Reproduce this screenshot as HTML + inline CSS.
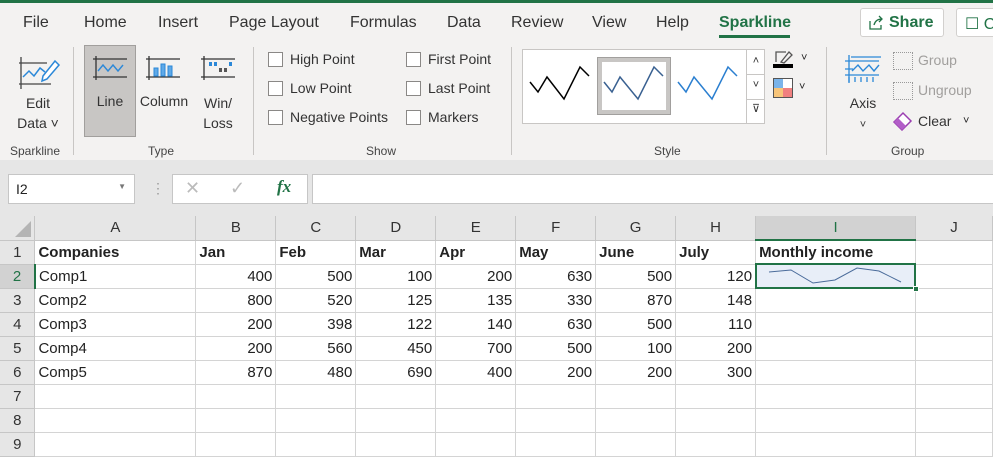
<!DOCTYPE html>
<html><head><meta charset="utf-8"><style>
*{box-sizing:border-box;margin:0;padding:0}
body{width:993px;height:437px;overflow:hidden;background:#fff;font-family:"Liberation Sans",sans-serif;position:relative;color:#222}
.a{position:absolute;white-space:nowrap}
.rb{position:absolute;left:0;top:0;width:993px;height:160px;background:#f3f2f1;border-top:3px solid #217346}
.tab{position:absolute;top:14px;font-size:16px;color:#333}
.sep{position:absolute;top:47px;width:1px;height:108px;background:#c8c6c4}
.lbl{position:absolute;top:144px;font-size:12px;color:#444}
.cb{position:absolute;width:15px;height:15px;border:1px solid #8a8886;background:#fff}
.ct{position:absolute;font-size:14px;color:#333}
.bt{position:absolute;font-size:14px;color:#333;text-align:center}
.grid td{border-right:1px solid #d4d4d4;border-bottom:1px solid #d4d4d4;height:24px;font-size:15px;padding:0 3px;overflow:hidden;white-space:nowrap;line-height:23px}
.grid{position:absolute;left:0;top:216px;border-collapse:collapse;table-layout:fixed}
.grid tr{height:24px}
.grid tr:first-child td{background:#e6e6e6;text-align:center;border-color:#c6c6c6;color:#333}
.grid td.rh{background:#e6e6e6;text-align:center;border-color:#c6c6c6;color:#333}
.n{text-align:right}
.b{font-weight:bold}
</style></head><body>
<div class="rb"></div>
<div class="tab" style="left:23px">File</div>
<div class="tab" style="left:84px">Home</div>
<div class="tab" style="left:158px">Insert</div>
<div class="tab" style="left:229px">Page Layout</div>
<div class="tab" style="left:350px">Formulas</div>
<div class="tab" style="left:447px">Data</div>
<div class="tab" style="left:511px">Review</div>
<div class="tab" style="left:592px">View</div>
<div class="tab" style="left:656px">Help</div>
<div class="tab" style="left:719px;color:#217346;font-weight:bold">Sparkline</div>
<div class="a" style="left:719px;top:35px;width:71px;height:3px;background:#217346"></div>
<div class="a" style="left:860px;top:8px;width:84px;height:29px;background:#fff;border:1px solid #d2d0ce;border-radius:3px;color:#217346;font-weight:bold;font-size:16px;padding:5px 0 0 28px">Share</div>
<svg class="a" style="left:868px;top:15px" width="16" height="16"><path d="M2 6v8h11v-4M6 10c1-4 4-6 8-6M11 1l3 3-3 3" fill="none" stroke="#217346" stroke-width="1.3"/></svg>
<div class="a" style="left:956px;top:8px;width:50px;height:29px;background:#fff;border:1px solid #d2d0ce;border-radius:3px;color:#217346;font-size:16px;padding:5px 0 0 8px">☐ C</div>

<svg class="a" style="left:17px;top:55px" width="44" height="36"><path d="M4 2v32M2 8h28M2 29h32" stroke="#444" stroke-width="1.3" fill="none"/><path d="M6 22l6-6 5 5 6-8 5 4" stroke="#2b88d8" stroke-width="1.5" fill="none"/><path d="M38 6l4 4-12 14-5 2 1-5z" stroke="#2b88d8" stroke-width="1.5" fill="#fff"/></svg>
<div class="bt" style="left:10px;top:93px;width:56px;line-height:20px">Edit<br>Data ˅</div>
<div class="lbl" style="left:10px">Sparkline</div>
<div class="sep" style="left:73px"></div>
<div class="a" style="left:84px;top:45px;width:52px;height:92px;background:#c8c6c4;border:1px solid #a19f9d"></div>
<svg class="a" style="left:92px;top:55px" width="36" height="26"><path d="M4 1v24M1 4h34M1 22h34" stroke="#333" stroke-width="1.3"/><path d="M6 16l5-6 5 6 5-6 5 6 5-6" stroke="#2b88d8" stroke-width="1.4" fill="none"/></svg>
<div class="bt" style="left:84px;top:93px;width:52px">Line</div>
<svg class="a" style="left:145px;top:55px" width="36" height="26"><path d="M4 1v24M1 4h34M1 22h34" stroke="#333" stroke-width="1.3"/><rect x="9" y="13" width="4" height="8" fill="#5ea9e8" stroke="#2b88d8"/><rect x="16" y="9" width="4" height="12" fill="#5ea9e8" stroke="#2b88d8"/><rect x="23" y="11" width="4" height="10" fill="#5ea9e8" stroke="#2b88d8"/></svg>
<div class="bt" style="left:136px;top:93px;width:56px">Column</div>
<svg class="a" style="left:200px;top:55px" width="36" height="26"><path d="M4 1v24M1 4h34M1 22h34" stroke="#333" stroke-width="1.3"/><rect x="9" y="7" width="3" height="4" fill="#2b88d8"/><rect x="14" y="7" width="3" height="4" fill="#2b88d8"/><rect x="19" y="13" width="3" height="4" fill="#555"/><rect x="24" y="13" width="3" height="4" fill="#555"/><rect x="29" y="7" width="3" height="4" fill="#2b88d8"/></svg>
<div class="bt" style="left:194px;top:93px;width:48px;line-height:20px">Win/<br>Loss</div>
<div class="lbl" style="left:148px">Type</div>
<div class="sep" style="left:253px"></div>
<div class="cb" style="left:268px;top:52px"></div><div class="ct" style="left:290px;top:51px">High Point</div>
<div class="cb" style="left:268px;top:81px"></div><div class="ct" style="left:290px;top:80px">Low Point</div>
<div class="cb" style="left:268px;top:110px"></div><div class="ct" style="left:290px;top:109px">Negative Points</div>
<div class="cb" style="left:406px;top:52px"></div><div class="ct" style="left:428px;top:51px">First Point</div>
<div class="cb" style="left:406px;top:81px"></div><div class="ct" style="left:428px;top:80px">Last Point</div>
<div class="cb" style="left:406px;top:110px"></div><div class="ct" style="left:428px;top:109px">Markers</div>
<div class="lbl" style="left:366px">Show</div>
<div class="sep" style="left:511px"></div>
<div class="a" style="left:522px;top:49px;width:243px;height:75px;background:#fff;border:1px solid #c8c6c4"></div>
<div class="a" style="left:597px;top:57px;width:74px;height:58px;border:1px solid #a19f9d;background:#c8c6c4"><div style="margin:4px;height:48px;background:#fff"></div></div>
<svg class="a" style="left:0;top:0" width="760" height="130"><polyline points="530,82 538,92 547,77 564,99 580,67 589,76" stroke="#000" stroke-width="1.5" fill="none"/><polyline points="604,82 612,92 620,77 638,99 654,67 663,76" stroke="#3a6191" stroke-width="1.5" fill="none"/><polyline points="678,82 686,92 694,77 712,99 728,67 737,76" stroke="#2b7fd0" stroke-width="1.5" fill="none"/></svg>
<div class="a" style="left:746px;top:49px;width:19px;height:75px;border-left:1px solid #c8c6c4;font-size:11px;text-align:center;line-height:24px;color:#333">˄<br>˅<br>⊽</div>
<div class="a" style="left:746px;top:74px;width:19px;height:1px;background:#c8c6c4"></div>
<div class="a" style="left:746px;top:99px;width:19px;height:1px;background:#c8c6c4"></div>
<svg class="a" style="left:773px;top:49px" width="22" height="20"><path d="M3 13V3h10M8 13l8-10 3 3-8 8z" stroke="#555" stroke-width="1.3" fill="none"/><rect x="0" y="15" width="20" height="4" fill="#000"/></svg>
<div class="a" style="left:801px;top:52px;font-size:11px">˅</div>
<div class="a" style="left:773px;top:78px;width:20px;height:20px;border:1px solid #555;background:linear-gradient(90deg,#7ab4ea 50%,#fff 50%);"></div>
<div class="a" style="left:774px;top:88px;width:9px;height:9px;background:#f7c57a"></div>
<div class="a" style="left:783px;top:88px;width:9px;height:9px;background:#f08080"></div>
<div class="a" style="left:799px;top:81px;font-size:11px">˅</div>
<div class="lbl" style="left:654px">Style</div>
<div class="sep" style="left:826px"></div>
<svg class="a" style="left:843px;top:53px" width="40" height="32"><path d="M2 8h34M2 16h8M2 22h34M6 2v28" stroke="#2b88d8" stroke-width="1.3"/><path d="M8 4h30M6 24v5M12 24v5M18 24v5M24 24v5M30 24v5" stroke="#2b88d8" stroke-width="1.3"/><path d="M9 18l6-6 5 6 6-6 5 6 5-6" stroke="#2b88d8" stroke-width="1.4" fill="none"/></svg>
<div class="bt" style="left:843px;top:93px;width:40px;line-height:20px">Axis<br><span style="font-size:11px">˅</span></div>
<div class="a" style="left:893px;top:52px;width:20px;height:18px;border:1px dotted #999"></div>
<div class="ct" style="left:918px;top:52px;color:#a19f9d">Group</div>
<div class="a" style="left:893px;top:82px;width:20px;height:18px;border:1px dotted #999"></div>
<div class="ct" style="left:918px;top:82px;color:#a19f9d">Ungroup</div>
<svg class="a" style="left:892px;top:111px" width="22" height="20"><path d="M2 11l9-9 8 8-9 9z" fill="#fff" stroke="#9b3fb1" stroke-width="1.5"/><path d="M2 11l4-4 8 8-4 4z" fill="#b25ec8"/></svg>
<div class="ct" style="left:918px;top:113px">Clear</div>
<div class="a" style="left:963px;top:115px;font-size:11px">˅</div>
<div class="lbl" style="left:891px">Group</div>
<div class="a" style="left:0;top:160px;width:993px;height:56px;background:#e6e6e6"></div>
<div class="a" style="left:8px;top:174px;width:127px;height:30px;background:#fff;border:1px solid #c6c6c6;font-size:14px;padding:6px 0 0 7px">I2<span style="position:absolute;right:8px;top:7px;font-size:8px;color:#777">▼</span></div>
<div class="a" style="left:151px;top:180px;color:#999;font-size:14px">⋮</div>
<div class="a" style="left:172px;top:174px;width:136px;height:30px;background:#fff;border:1px solid #c6c6c6"></div>
<div class="a" style="left:185px;top:178px;color:#bbb;font-size:18px">✕</div>
<div class="a" style="left:230px;top:178px;color:#bbb;font-size:18px">✓</div>
<div class="a" style="left:277px;top:177px;color:#217346;font-size:17px;font-style:italic;font-family:'Liberation Serif',serif;font-weight:bold">fx</div>
<div class="a" style="left:312px;top:174px;width:690px;height:30px;background:#fff;border:1px solid #c6c6c6"></div>
<div class="a" style="left:0;top:216px;width:993px;height:221px;background:#fff"></div>
<table class="grid">
<colgroup><col style="width:35px"><col style="width:161px"><col style="width:80px"><col style="width:80px"><col style="width:80px"><col style="width:80px"><col style="width:80px"><col style="width:80px"><col style="width:80px"><col style="width:160px"><col style="width:77px"></colgroup>
<tr><td style="position:relative"><svg style="position:absolute;right:3px;bottom:3px" width="16" height="16"><path d="M16 0v16H0z" fill="#b4b4b4"/></svg></td><td>A</td><td>B</td><td>C</td><td>D</td><td>E</td><td>F</td><td>G</td><td>H</td><td style="background:#d2d2d2;border-bottom:2px solid #217346;color:#217346">I</td><td>J</td></tr>
<tr><td class="rh">1</td><td class="b">Companies</td><td class="b">Jan</td><td class="b">Feb</td><td class="b">Mar</td><td class="b">Apr</td><td class="b">May</td><td class="b">June</td><td class="b">July</td><td class="b">Monthly income</td><td></td></tr>
<tr><td class="rh" style="background:#d2d2d2;border-right:2px solid #217346;color:#217346">2</td><td>Comp1</td><td class="n">400</td><td class="n">500</td><td class="n">100</td><td class="n">200</td><td class="n">630</td><td class="n">500</td><td class="n">120</td><td></td><td></td></tr>
<tr><td class="rh">3</td><td>Comp2</td><td class="n">800</td><td class="n">520</td><td class="n">125</td><td class="n">135</td><td class="n">330</td><td class="n">870</td><td class="n">148</td><td></td><td></td></tr>
<tr><td class="rh">4</td><td>Comp3</td><td class="n">200</td><td class="n">398</td><td class="n">122</td><td class="n">140</td><td class="n">630</td><td class="n">500</td><td class="n">110</td><td></td><td></td></tr>
<tr><td class="rh">5</td><td>Comp4</td><td class="n">200</td><td class="n">560</td><td class="n">450</td><td class="n">700</td><td class="n">500</td><td class="n">100</td><td class="n">200</td><td></td><td></td></tr>
<tr><td class="rh">6</td><td>Comp5</td><td class="n">870</td><td class="n">480</td><td class="n">690</td><td class="n">400</td><td class="n">200</td><td class="n">200</td><td class="n">300</td><td></td><td></td></tr>
<tr><td class="rh">7</td><td></td><td></td><td></td><td></td><td></td><td></td><td></td><td></td><td></td><td></td></tr>
<tr><td class="rh">8</td><td></td><td></td><td></td><td></td><td></td><td></td><td></td><td></td><td></td><td></td></tr>
<tr><td class="rh">9</td><td></td><td></td><td></td><td></td><td></td><td></td><td></td><td></td><td></td><td></td></tr>
</table>
<div class="a" style="left:755px;top:263px;width:161px;height:26px;border:2px solid #217346;background:#e8eef8"></div>
<div class="a" style="left:913px;top:286px;width:6px;height:6px;background:#217346;border:1px solid #fff"></div>
<svg class="a" style="left:755px;top:263px" width="160" height="26"><polyline points="14,9 36,7 58,20 80,17 102,5 124,8 146,19" fill="none" stroke="#4a6b9a" stroke-width="1"/></svg>
</body></html>
